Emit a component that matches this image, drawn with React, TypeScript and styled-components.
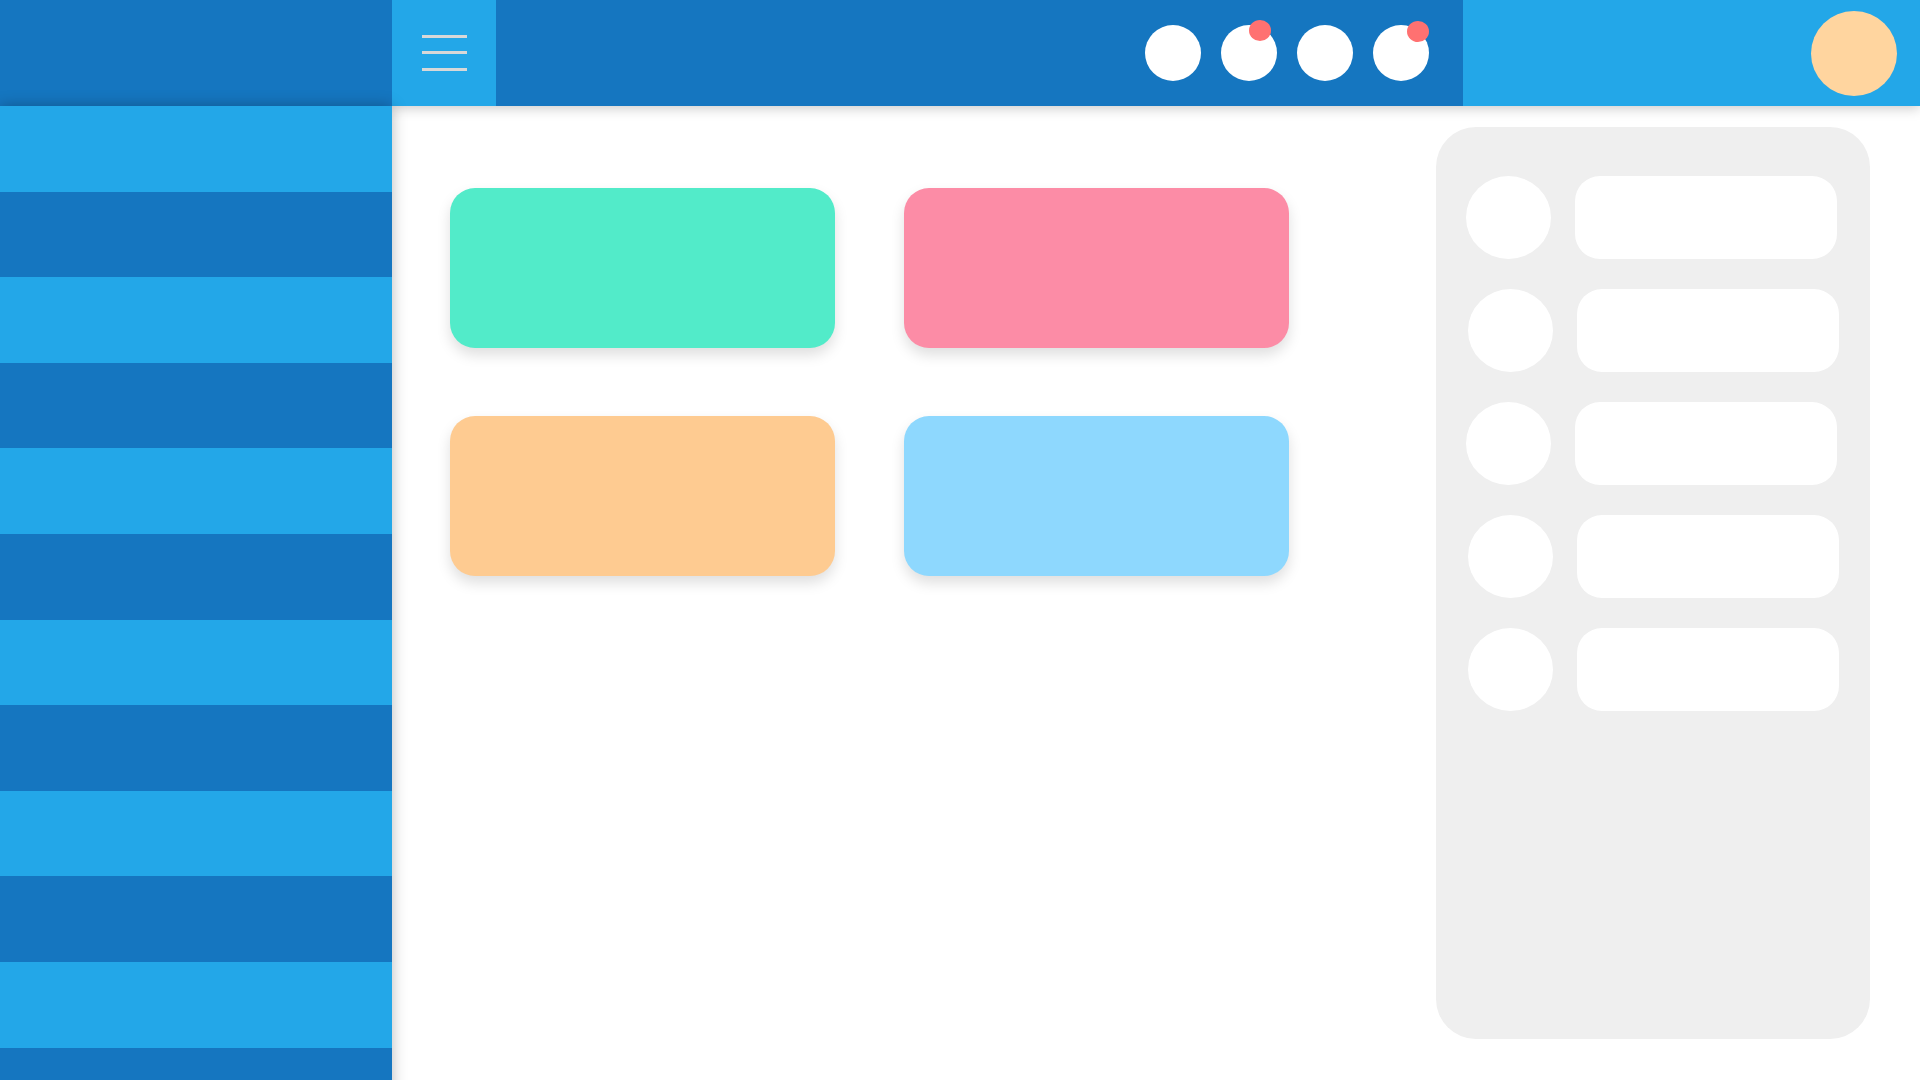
import React from "react";
import styled, { createGlobalStyle } from "styled-components";

const DARK = "#1576c0";
const LIGHT = "#23a7e8";

const GlobalStyle = createGlobalStyle`
  html, body {
    margin: 0;
    padding: 0;
    height: 100%;
    overflow: hidden;
    background: #ffffff;
    font-family: "Liberation Sans", Arial, sans-serif;
  }
  * { box-sizing: border-box; }
`;

const Shell = styled.div`
  display: grid;
  grid-template-columns: 392px 1fr;
  grid-template-rows: 106px 1fr;
  width: 1920px;
  height: 1080px;
  overflow: hidden;
`;

const Header = styled.header`
  grid-column: 1 / 3;
  grid-row: 1;
  display: flex;
  position: relative;
  z-index: 1;
  box-shadow: 0 2px 12px rgba(0, 0, 0, 0.22);
`;

const Brand = styled.div`
  width: 392px;
  background: ${DARK};
`;

const MenuButton = styled.div`
  width: 104px;
  background: ${LIGHT};
  display: flex;
  flex-direction: column;
  align-items: center;
  justify-content: center;
  gap: 13.5px;
  padding-bottom: 1px;
`;

const MenuLine = styled.span`
  display: block;
  width: 45px;
  height: 3px;
  background: #d8d8d8;
`;

const Nav = styled.div`
  flex: 1;
  background: ${DARK};
  display: flex;
  align-items: center;
  justify-content: flex-end;
  gap: 20px;
  padding-right: 34px;
`;

const NavIcon = styled.div`
  position: relative;
  width: 56px;
  height: 56px;
  border-radius: 50%;
  background: #ffffff;
`;

const Badge = styled.span<{ $left: number; $top: number }>`
  position: absolute;
  top: ${(p) => p.$top}px;
  left: ${(p) => p.$left}px;
  width: 22px;
  height: 21px;
  border-radius: 50%;
  background: #ff7171;
`;

const UserArea = styled.div`
  width: 457px;
  background: ${LIGHT};
  display: flex;
  align-items: center;
  justify-content: flex-end;
  padding-right: 23px;
`;

const Avatar = styled.div`
  width: 86px;
  height: 85px;
  border-radius: 50%;
  background: #ffd59f;
`;

const Sidebar = styled.aside`
  grid-column: 1;
  grid-row: 2;
  position: relative;
  z-index: 2;
  display: flex;
  flex-direction: column;
  box-shadow: 0 0 14px rgba(0, 0, 0, 0.28);
`;

const Stripe = styled.div<{ $light: boolean }>`
  flex: 0 0 85.6px;
  background: ${(p) => (p.$light ? LIGHT : DARK)};
`;

const Main = styled.main`
  grid-column: 2;
  grid-row: 2;
  display: flex;
  justify-content: space-between;
  align-items: flex-start;
  padding: 0 50px 41px 58px;
  background: #ffffff;
  min-height: 0;
`;

const CardGrid = styled.div`
  display: grid;
  grid-template-columns: repeat(2, 385px);
  grid-auto-rows: 160px;
  column-gap: 69px;
  row-gap: 68px;
  margin-top: 82px;
`;

const Card = styled.div<{ $color: string }>`
  background: ${(p) => p.$color};
  border-radius: 25px;
  box-shadow: 0 7px 14px rgba(0, 0, 0, 0.13);
`;

const Panel = styled.section`
  width: 434px;
  height: 912px;
  margin-top: 21px;
  background: #efefef;
  border-radius: 40px;
  padding: 49px 31px 0 32px;
  display: flex;
  flex-direction: column;
  gap: 30px;
`;

const PanelRow = styled.div<{ $shift: number }>`
  display: flex;
  gap: 24px;
  height: 83px;
  margin-left: ${(p) => p.$shift}px;
  margin-right: ${(p) => -p.$shift}px;
`;

const RowAvatar = styled.div`
  flex: 0 0 85px;
  height: 83px;
  border-radius: 50%;
  background: #ffffff;
`;

const RowBar = styled.div`
  flex: 1;
  border-radius: 25px;
  background: #ffffff;
`;

const cards = ["#52ebc9", "#fc8ca6", "#fecb91", "#8ed8fe"];
const navIcons: Array<{ left: number; top: number } | null> = [
  null,
  { left: 28, top: -5 },
  null,
  { left: 34, top: -4 },
];
const rowShifts = [-2, 0, -2, 0, 0];

export default function App() {
  return (
    <>
      <GlobalStyle />
      <Shell>
        <Header>
          <Brand />
          <MenuButton>
            <MenuLine />
            <MenuLine />
            <MenuLine />
          </MenuButton>
          <Nav>
            {navIcons.map((b, i) => (
              <NavIcon key={i}>{b && <Badge $left={b.left} $top={b.top} />}</NavIcon>
            ))}
          </Nav>
          <UserArea>
            <Avatar />
          </UserArea>
        </Header>
        <Sidebar>
          {Array.from({ length: 12 }).map((_, i) => (
            <Stripe key={i} $light={i % 2 === 0} />
          ))}
        </Sidebar>
        <Main>
          <CardGrid>
            {cards.map((c) => (
              <Card key={c} $color={c} />
            ))}
          </CardGrid>
          <Panel>
            {rowShifts.map((s, i) => (
              <PanelRow key={i} $shift={s}>
                <RowAvatar />
                <RowBar />
              </PanelRow>
            ))}
          </Panel>
        </Main>
      </Shell>
    </>
  );
}
